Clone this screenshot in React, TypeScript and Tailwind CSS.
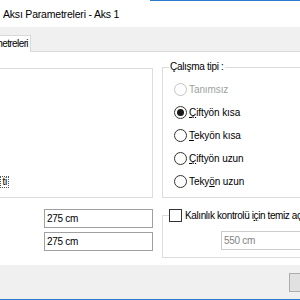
import React from "react";

function Radio({ label, checked, disabled, u }: { label: string; checked?: boolean; disabled?: boolean; u?: number }) {
  const chars = label.split("");
  return (
    <div className="flex h-[23px] items-center">
      <div
        className={
          "flex h-[13px] w-[13px] shrink-0 items-center justify-center rounded-full border bg-white " +
          (disabled ? "border-[#c4c4c4]" : "border-[#333333]")
        }
      >
        {checked ? <div className="h-[7px] w-[7px] rounded-full bg-[#1a1a1a]" /> : null}
      </div>
      <span className={"ml-[2px] whitespace-nowrap tracking-[-0.1px] " + (disabled ? "text-[#a0a0a0]" : "text-black")}>
        {chars.map((c, i) => (i === u ? <span key={i} className="underline underline-offset-1">{c}</span> : <span key={i}>{c}</span>))}
      </span>
    </div>
  );
}

export default function App() {
  return (
    <div
      className="flex h-[300px] w-[300px] flex-col overflow-hidden bg-white text-[10px] leading-[12px] tracking-[-0.3px] text-black"
      style={{ fontFamily: '"Liberation Sans", Arial, sans-serif' }}
    >
      {/* title bar */}
      <div className="flex h-px shrink-0">
        <div className="w-[150px] bg-white" />
        <div className="flex-1 bg-[#2b79d0]" />
      </div>
      <div className="flex h-[26px] shrink-0 items-center pl-[3px] text-[10.5px] tracking-[-0.2px]">
        Aksı Parametreleri - Aks 1
      </div>
      {/* tab strip */}
      <div className="flex h-[25px] shrink-0 items-end border-b border-[#dadada] bg-[#f0f0f0]">
        <div className="-mb-px flex h-[17px] w-[31px] items-center justify-end whitespace-nowrap border-r border-t border-[#d9d9d9] bg-white pr-[2px] tracking-[-0.6px]">
          metreleri
        </div>
      </div>
      {/* content */}
      <div className="flex h-[213px] shrink-0 flex-col bg-white pt-[15px]">
        <div className="-ml-[10px] flex items-start gap-[9px]">
          <div className="mt-px flex h-[130px] w-[163px] shrink-0 flex-col justify-end border border-[#dcdcdc] pb-[9px] pl-[9px]">
            <div className="flex h-[12px] w-[9px] items-center justify-end border border-dotted border-[#555] pr-px">
              ti
            </div>
          </div>
          <div className="relative h-[131px] w-[150px] shrink-0 border border-[#dcdcdc] pl-[11px] pt-[10px]">
            <div className="absolute -top-[7px] left-[6px] whitespace-nowrap bg-white px-[1px]">Çalışma tipi :</div>
            <Radio label="Tanımsız" disabled />
            <Radio label="Çiftyön kısa" checked u={0} />
            <Radio label="Tekyön kısa" u={0} />
            <Radio label="Çiftyön uzun" u={0} />
            <Radio label="Tekyön uzun" u={4} />
          </div>
        </div>
        <div className="flex items-start gap-[9px]">
          <div className="ml-[44px] mt-[11px] flex w-[109px] shrink-0 flex-col gap-[4px]">
            <div className="flex h-[19px] items-center border border-[#a0a0a0] bg-white pl-[2px]">275 cm</div>
            <div className="flex h-[19px] items-center border border-[#a0a0a0] bg-white pl-[2px]">275 cm</div>
          </div>
          <div className="relative mt-[17px] h-[43px] w-[150px] shrink-0 border border-[#dcdcdc] pl-[58px] pt-[15px]">
            <div className="absolute -top-[7px] left-[6px] flex items-center bg-white pr-[2px]">
              <div className="h-[13px] w-[13px] shrink-0 border border-[#333333] bg-white" />
              <span className="ml-[3px] whitespace-nowrap tracking-[-0.4px]">
                Kalınlık kontrolü i<span className="underline underline-offset-1">ç</span>in temiz aç
              </span>
            </div>
            <div className="flex h-[19px] w-[100px] items-center border border-[#cccccc] bg-white pl-[2px] text-[#838383]">
              550 cm
            </div>
          </div>
        </div>
      </div>
      {/* footer */}
      <div className="flex h-[34px] shrink-0 items-start bg-[#f0f0f0] pl-[289px] pt-[8px]">
        <div className="h-[19px] w-[75px] shrink-0 border border-[#adadad] bg-[#e1e1e1]" />
      </div>
      <div className="h-px shrink-0 bg-[#2b79d0]" />
    </div>
  );
}
